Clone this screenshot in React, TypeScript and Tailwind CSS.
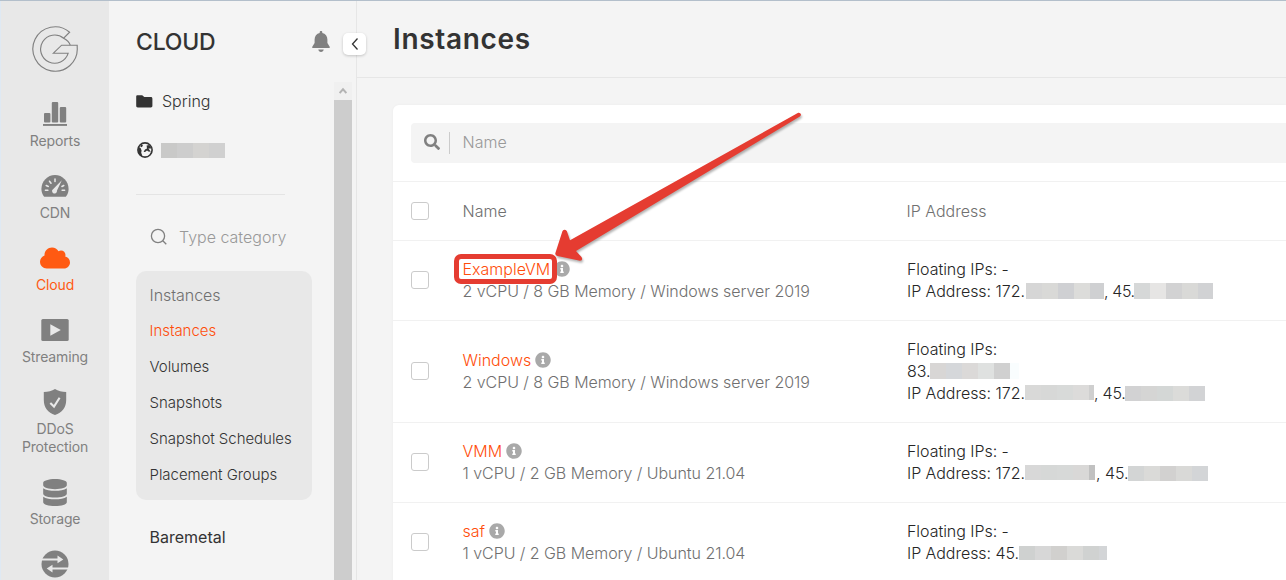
import type { ReactNode } from 'react';
import { FaCloud, FaDatabase, FaInfoCircle, FaSearch } from 'react-icons/fa';

function LogoIcon() {
  return (
    <svg width="48" height="48" viewBox="0 0 48 48" fill="none" stroke="#808080" strokeWidth="1.15" className="shrink-0">
      <path d="M38.6 7.2A22.2 22.2 0 1 0 46.2 22.2V20.2H30.6L22.4 28.2H37.2A14.1 14.1 0 1 1 32.6 13.2Z" />
      <path d="M32.6 13.2C36 15 38.5 17.6 39.2 20.2" />
    </svg>
  );
}

function ReportsIcon() {
  return (
    <svg width="26" height="26" viewBox="0 0 26 26" fill="#808080">
      <rect x="2" y="12" width="6.4" height="9.5" rx="1" />
      <rect x="9.8" y="1" width="6.4" height="20.5" rx="1" />
      <rect x="17.8" y="6" width="6.4" height="15.5" rx="1" />
      <rect x="1" y="23" width="24" height="1.9" />
    </svg>
  );
}

function GaugeIcon() {
  return (
    <svg width="28" height="24" viewBox="0 0 28 24">
      <path d="M3.2 22.8C1.2 20.6.4 17.8.4 15 .4 7.4 6.4 1 14 1s13.6 6.4 13.6 14c0 2.800-.8 5.600-2.800 7.800Z" fill="#808080" />
      <g stroke="#e8e8e8" strokeWidth="1.5" strokeLinecap="round" fill="none">
        <path d="M4.400 16.200H6.900M23.600 16.200H21.100M5.200 11.500L7.300 12.500M8.500 7.200L10 9.300M14 5V7.600M22.800 11.500L20.900 12.500" />
      </g>
      <path d="M20.800 6.300L16 16.600A2.500 2.500 0 1 1 12.300 14.900Z" fill="#e8e8e8" />
    </svg>
  );
}

function PlayIcon() {
  return (
    <svg width="28" height="24" viewBox="0 0 28 24">
      <rect x="0.300" y="1" width="27.400" height="22" rx="1.500" fill="#808080" />
      <path d="M9.300 6.200V17.800L19.800 12Z" fill="#e8e8e8" />
    </svg>
  );
}

function ShieldIcon() {
  return (
    <svg width="24" height="28" viewBox="0 0 24 28">
      <path d="M12 1C9 3 5 3.900.8 4V12C.8 19.600 5 24.500 12 27 19 24.500 23.200 19.600 23.200 12V4C19 3.900 15 3 12 1Z" fill="#808080" />
      <path d="M7.300 14.900L11 18.500 16.600 9.800" stroke="#e8e8e8" strokeWidth="2.100" fill="none" />
    </svg>
  );
}

function ExchangeIcon() {
  return (
    <svg width="28" height="28" viewBox="0 0 28 28">
      <circle cx="14" cy="14" r="13.500" fill="#808080" />
      <path d="M0 8.400H16.500V5.600L22.300 9.500 16.500 13.300V10.600H0ZM28 17.400H11.500V14.700L5.700 18.500 11.500 22.400V19.600H28Z" fill="#e8e8e8" />
    </svg>
  );
}

function BellIcon() {
  return (
    <svg width="18" height="22" viewBox="0 0 18 22" fill="#808080">
      <path d="M9 0C8.200 0 7.700.5 7.700 1.300V2C4.500 2.700 2.600 5.200 2.600 8.400V12L.3 15.800C0 16.500.1 17 .7 17H17.300C17.900 17 18 16.500 17.700 15.800L15.400 12V8.400C15.400 5.200 13.500 2.700 10.300 2V1.300C10.300.5 9.800 0 9 0Z" />
      <path d="M6.300 18.500H11.700C11.500 20 10.500 21 9 21S6.500 20 6.300 18.500Z" />
    </svg>
  );
}

function FolderIcon() {
  return (
    <svg width="17" height="13" viewBox="0 0 17 13" fill="#333333">
      <path d="M1.600.2H6.200L8.300 2.100H14.800C15.900 2.100 16.400 2.700 16.400 3.700V10.800C16.400 11.800 15.900 12.400 14.800 12.400H1.800C.8 12.400.2 11.800.2 10.800V1.600C.2.700.7.2 1.600.2Z" />
    </svg>
  );
}

function GlobeIcon() {
  return (
    <svg width="16" height="16" viewBox="0 0 16 16">
      <circle cx="8" cy="8" r="7.100" fill="#f4f4f4" stroke="#333333" strokeWidth="1.600" />
      <path d="M1 4.600L3.600 6 4.600 8.400 4.200 10.800 5.600 14.600C2.500 14 1 11 1 4.600Z" fill="#333333" />
      <path d="M4.400 2.200L6 3.600 4.800 5.200 3.200 4.600ZM9.600 3.600L12.300 3 14.600 6.400 11.400 6.500 13.800 9.800 11.400 9.500 10 8.600 8 10 6.600 9.800 8 7.600 10 6.600Z" fill="#333333" />
    </svg>
  );
}

function Mosaic({ colors, className }: { colors: string[]; className: string }) {
  return (
    <span className={`flex shrink-0 overflow-hidden ${className}`}>
      {colors.map((c, i) => (
        <span key={i} className="w-4 shrink-0 last:flex-1" style={{ backgroundColor: c }} />
      ))}
    </span>
  );
}

function NavItem({ icon, label, active }: { icon: ReactNode; label: string; active?: boolean }) {
  return (
    <a className={`flex w-full shrink-0 flex-col items-center gap-1 text-center text-[14px] leading-[18px] ${active ? 'text-[#ff5a12]' : 'text-[#808080]'}`}>
      <span className="flex h-7 items-center justify-center">{icon}</span>
      <span className="w-20 tracking-[-0.01em]">{label}</span>
    </a>
  );
}

function Checkbox() {
  return <span className="block size-[18px] shrink-0 rounded-[3px] border border-[#cbcbcb] bg-white" />;
}

function Row({ name, spec, last, highlight, children }: { name: string; spec: string; last?: boolean; highlight?: boolean; children: ReactNode }) {
  return (
    <div className={`flex shrink-0 items-center border-[#f1f1f1] pt-[17px] pb-[18px] pl-[18px] ${last ? '' : 'border-b'}`}>
      <Checkbox />
      <div className="ml-[33.5px] w-[443.5px] shrink-0 leading-[22px] text-[#707070]">
        <div className="flex items-center gap-1">
          <span className="relative text-[#ff4d0a]">
            {name}
            {highlight && <span className="absolute -top-1 -left-[8.5px] z-10 h-[30px] w-[103px] rounded-[7px] border-[5px] border-[#e53c31]" />}
          </span>
          <FaInfoCircle className="size-4 text-[#a9a9a9]" />
        </div>
        <div className="tracking-[-0.05px]">{spec}</div>
      </div>
      <div className="pl-px leading-[22px] tracking-[-0.04px] whitespace-nowrap text-[#262626]">{children}</div>
    </div>
  );
}

const links = ['Volumes', 'Snapshots', 'Snapshot Schedules', 'Placement Groups'];

export default function App() {
  return (
    <div className="relative flex h-[580px] w-[1286px] overflow-hidden border-t border-[#b3bfcb] bg-[#f4f4f4] font-[Inter,sans-serif] text-[16px] text-[#333333]">
      <nav className="flex w-[109px] shrink-0 flex-col items-center gap-[22px] border-l border-[#dfe9f3] bg-[#e8e8e8] pt-[24px]">
        <LogoIcon />
        <div className="mt-[5px] flex w-full flex-col items-center gap-[22px]">
          <NavItem icon={<ReportsIcon />} label="Reports" />
          <NavItem icon={<GaugeIcon />} label="CDN" />
          <NavItem icon={<FaCloud className="h-6 w-[30px]" />} label="Cloud" active />
          <NavItem icon={<PlayIcon />} label="Streaming" />
          <NavItem icon={<ShieldIcon />} label="DDoS Protection" />
          <NavItem icon={<FaDatabase className="h-[27px] w-6" />} label="Storage" />
          <NavItem icon={<ExchangeIcon />} label="" />
        </div>
      </nav>

      <aside className="relative flex w-[248px] shrink-0 border-r border-[#e6e6e6]">
        <div className="flex w-[225px] shrink-0 flex-col pl-[27px]">
          <div className="mt-[25px] flex h-8 items-center justify-between pr-[4px]">
            <h2 className="text-[23px] font-medium tracking-[-0.2px]">CLOUD</h2>
            <BellIcon />
          </div>
          <div className="mt-[31px] flex h-6 items-center gap-[9px] font-light">
            <FolderIcon />
            <span>Spring</span>
          </div>
          <div className="mt-[25px] flex h-6 items-center gap-2 pl-px">
            <GlobeIcon />
            <Mosaic className="h-[15px] w-16" colors={['#c9c9c8', '#cdcdcd', '#d4d3d1', '#d0d0d0']} />
          </div>
          <div className="mt-[32px] h-px w-[149px] shrink-0 bg-[#e4e4e4]" />
          <div className="mt-[30px] flex h-6 items-center gap-[11px] pl-[14px] font-light text-[#999999]">
            <svg width="18" height="18" viewBox="0 0 18 18" fill="none" stroke="#808080" strokeWidth="1.300">
              <circle cx="8" cy="8" r="6.600" />
              <path d="M12.800 12.800L16.300 16.300" />
            </svg>
            <span>Type category</span>
          </div>
          <div className="mt-[22px] flex h-[229px] w-[176px] shrink-0 flex-col rounded-[10px] bg-[#e8e8e8] pt-[7px] pl-[13.5px] text-[15px] leading-9 font-light tracking-[-0.04px]">
            <span className="h-[35px] text-[16px] leading-[34px] text-[#707070]">Instances</span>
            <span className="h-9 text-[#ff4d0a]">Instances</span>
            {links.map((l) => (
              <span key={l} className="h-9 whitespace-nowrap">{l}</span>
            ))}
          </div>
          <span className="mt-[25px] pl-[13.5px] leading-6 font-normal">Baremetal</span>
        </div>
        <div className="mt-[81px] flex w-[18px] flex-col bg-[#cdcdcd]">
          <span className="flex h-[18px] items-center justify-center bg-[#f0f0f0]">
            <svg width="8" height="8" viewBox="0 0 8 8" fill="none" stroke="#b3b3b3" strokeWidth="2">
              <path d="M.6 6L4 2.300 7.400 6" />
            </svg>
          </span>
        </div>
        <button className="absolute top-8 -right-[10px] z-10 flex h-[22px] w-[23px] items-center justify-center rounded-[5px] bg-white shadow-[0_1px_3px_rgba(0,0,0,0.2)]">
          <svg width="8" height="14" viewBox="0 0 8 14" fill="none" stroke="#333333" strokeWidth="1.300">
            <path d="M6.500 1.500L1.500 7 6.500 12.500" />
          </svg>
        </button>
      </aside>

      <main className="flex min-w-0 flex-1 flex-col">
        <header className="flex h-[77px] shrink-0 items-center border-b border-[#e6e6e6] pl-[36px]">
          <h1 className="text-[28px] leading-9 font-semibold tracking-[0.024em]">Instances</h1>
        </header>
        <section className="mt-[27px] ml-[36px] flex flex-1 flex-col rounded-tl-[6px] bg-white font-light shadow-[0_0_3px_rgba(0,0,0,0.04)]">
          <div className="shrink-0 border-b border-[#f1f1f1] pt-[18px] pb-[18px] pl-[18px]">
            <div className="flex h-10 items-center rounded-l-[4px] bg-[#f4f4f4] pb-0.5 pl-[13px] text-[#999999]">
              <FaSearch className="size-4 text-[#808080]" />
              <span className="mt-0.5 mr-[12.5px] ml-[9px] h-[22px] w-px bg-[#cbcbcb]" />
              <span>Name</span>
            </div>
          </div>
          <div className="flex h-[59px] shrink-0 items-center border-b border-[#f1f1f1] pl-[18px] text-[#707070]">
            <Checkbox />
            <span className="ml-[33.5px] w-[444px]">Name</span>
            <span>IP Address</span>
          </div>
          <Row name="ExampleVM" spec="2 vCPU / 8 GB Memory / Windows server 2019" highlight>
            <div>Floating IPs: -</div>
            <div className="flex">
              <span className="w-[119px]">IP Address: 172.</span>
              <Mosaic className="mt-[3px] h-4 w-[78px]" colors={['#d6d6d6', '#d9d9d7', '#cfd0d3', '#dcdcda', '#cfd0d2']} />
              <span className="w-[30px] tracking-[-0.4px]">, 45.</span>
              <Mosaic className="mt-[3px] h-4 w-[79px]" colors={['#d6d8d8', '#e6e5e4', '#d2d2d3', '#d9d9d7', '#d1d2d4']} />
            </div>
          </Row>
          <Row name="Windows" spec="2 vCPU / 8 GB Memory / Windows server 2019">
            <div>Floating IPs:</div>
            <div className="flex">
              <span className="w-[23px]">83.</span>
              <Mosaic className="mt-[3px] h-4 w-[89px]" colors={['#d8d6d5', '#d5d7da', '#dbd9d8', '#dfe1e0', '#d0d0d0', '#f9fdfe']} />
            </div>
            <div className="flex">
              <span className="w-[118px]">IP Address: 172.</span>
              <Mosaic className="mt-[3px] h-[15px] w-[69px]" colors={['#d9d9d8', '#d7d8d7', '#d8dad9', '#dcdbda', '#cfcfcf']} />
              <span className="w-[31px] tracking-[-0.2px]">, 45.</span>
              <Mosaic className="mt-1 h-[15px] w-20" colors={['#d2d2d3', '#d5d5d4', '#d4d7d6', '#dbdbd9', '#d2d3d5']} />
            </div>
          </Row>
          <Row name="VMM" spec="1 vCPU / 2 GB Memory / Ubuntu 21.04">
            <div>Floating IPs: -</div>
            <div className="flex">
              <span className="w-[118px]">IP Address: 172.</span>
              <Mosaic className="mt-[3px] h-[15px] w-[70px]" colors={['#d8d8d8', '#d6d8d7', '#d7d9d8', '#d9d8d7', '#c1c1c1']} />
              <span className="w-[33px] pl-px">, 45.</span>
              <Mosaic className="mt-1 h-[15px] w-20" colors={['#d3d5d5', '#dadad8', '#d2d1d0', '#d9d9d7', '#d3d5d7']} />
            </div>
          </Row>
          <Row name="saf" spec="1 vCPU / 2 GB Memory / Ubuntu 21.04" last>
            <div>Floating IPs: -</div>
            <div className="flex">
              <span className="w-[112px]">IP Address: 45.</span>
              <Mosaic className="mt-1 h-[14px] w-[88px]" colors={['#cfd1d0', '#d7d7d7', '#d1d0ce', '#dadad8', '#d0d2d1', '#d3d5d7']} />
            </div>
          </Row>
        </section>
      </main>

      <svg className="pointer-events-none absolute top-[-1px] left-0 z-20 drop-shadow-[1px_2px_1px_rgba(0,0,0,0.3)]" width="1286" height="580" viewBox="0 0 1286 580">
        <path d="M798.200 112.800Q800.500 112.500 801 114.500 801 115.800 799.500 116.800L576 251 581.500 257Q583.500 260.500 580 260.800L557.500 256Q554.800 255.500 555.400 253L562.500 231Q564.500 228.500 566.800 231L570 240.200Z" fill="#e53c31" />
      </svg>
    </div>
  );
}
